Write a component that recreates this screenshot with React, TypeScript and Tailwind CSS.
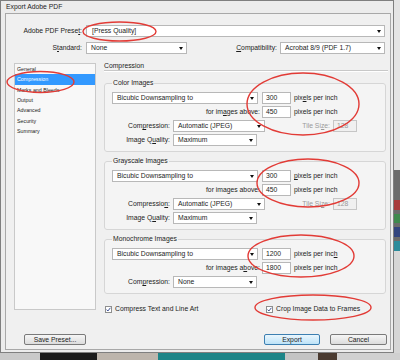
import type { ReactNode } from 'react'

/*
 * Export Adobe PDF dialog (Compression page) with the red marker
 * ellipses drawn over it. Everything is laid out in flow; only the
 * annotation layer is positioned absolutely.
 */

const Arrow = () => (
  <span className="w-0 h-0 border-l-[2.5px] border-r-[2.5px] border-t-[3px] border-l-transparent border-r-transparent border-t-[#111]" />
)

const Select = ({ value, w }: { value: string; w: string }) => (
  <div
    className={`${w} h-[12px] shrink-0 bg-white border border-[#b8b8b8] flex items-center justify-between pl-[4px] pr-[3px]`}
  >
    <span>{value}</span>
    <Arrow />
  </div>
)

const Field = ({ value, w, disabled }: { value: string; w: string; disabled?: boolean }) => (
  <div
    className={`${w} h-[12px] shrink-0 border flex items-center pl-[3px] ${
      disabled ? 'bg-[#f0f0f0] border-[#c6c6c6] text-[#9a9a9a]' : 'bg-white border-[#b8b8b8]'
    }`}
  >
    {value}
  </div>
)

const Label = ({ children, w, muted }: { children: ReactNode; w: string; muted?: boolean }) => (
  <span className={`${w} shrink-0 text-right ${muted ? 'text-[#9a9a9a]' : ''}`}>{children}</span>
)

const Check = ({ children }: { children: ReactNode }) => (
  <div className="flex items-center">
    <span className="w-[7px] h-[7px] bg-white border border-[#8e8f8f] flex items-center justify-center">
      <svg width="5" height="5" viewBox="0 0 5 5">
        <path d="M0.6 2.6 L1.9 4 L4.4 0.8" fill="none" stroke="#2a3f8a" strokeWidth="0.9" />
      </svg>
    </span>
    <span className="ml-[3px]">{children}</span>
  </div>
)

const Group = ({ title, children }: { title: string; children: ReactNode }) => (
  <fieldset className="w-[282px] border border-[#d6d6d6] rounded-[3px] bg-[#f4f4f4] px-[7px] pt-[5px] pb-[5px]">
    <legend className="px-[1px] leading-[8px]">{title}</legend>
    <div className="flex flex-col gap-[2px]">{children}</div>
  </fieldset>
)

const Row = ({ children }: { children: ReactNode }) => (
  <div className="h-[12px] flex items-center">{children}</div>
)

const sections = ['General', 'Compression', 'Marks and Bleeds', 'Output', 'Advanced', 'Security', 'Summary']

const App = () => {
  return (
    <div className="w-[400px] h-[360px] relative overflow-hidden flex flex-col bg-[#cfcfcf] text-[#1c1c1c] text-[6.8px] leading-[8px] font-['Liberation_Sans',Arial,sans-serif]">
      <div className="flex h-[353px]">
        {/* Window frame */}
        <div className="w-[394px] h-full bg-[#ececec] border border-[#7f7f7f] flex flex-col">
          <div className="h-[12px] pl-[5px] flex items-center">Export Adobe PDF</div>

          {/* Client area */}
          <div className="flex-1 ml-[4px] mr-[2px] mb-[2px] bg-[#f0f0f0] border border-[#a8a8a8] flex flex-col">
            <div className="mt-[11px] h-[12px] flex items-center">
              <Label w="w-[76px]">
                Adobe PDF Prese<u>t</u>:
              </Label>
              <div className="ml-[4px] w-[299px] h-[12px] bg-white border border-[#b8b8b8] flex items-center justify-between pl-[5px] pr-[3px]">
                <span>[Press Quality]</span>
                <Arrow />
              </div>
            </div>

            <div className="mt-[5px] h-[12px] flex items-center">
              <Label w="w-[76px]">
                S<u>t</u>andard:
              </Label>
              <div className="ml-[4px]">
                <Select value="None" w="w-[101px]" />
              </div>
              <Label w="w-[90px]">
                <u>C</u>ompatibility:
              </Label>
              <div className="ml-[3px]">
                <Select value="Acrobat 8/9 (PDF 1.7)" w="w-[105px]" />
              </div>
            </div>

            <div className="mt-[8px] h-[250px] flex">
              {/* Section list */}
              <div className="ml-[8px] mt-[1px] w-[82px] h-[247px] bg-[#f8f8f8] border border-[#c9c9c9] text-[5.3px]">
                {sections.map((s) => (
                  <div
                    key={s}
                    className={`h-[10.3px] pl-[2px] flex items-center ${
                      s === 'Compression' ? 'bg-[#3399ff] text-white' : ''
                    }`}
                  >
                    {s}
                  </div>
                ))}
              </div>

              {/* Compression page */}
              <div className="ml-[8px] w-[284px] flex flex-col">
                <div className="h-[9px] border-b border-[#c8c8c8] shadow-[0_1px_0_#ffffff]">Compression</div>

                <div className="mt-[8px]">
                  <Group title="Color Images">
                    <Row>
                      <Select value="Bicubic Downsampling to" w="w-[146px]" />
                      <div className="ml-[4px]">
                        <Field value="300" w="w-[29px]" />
                      </div>
                      <span className="ml-[3px]">
                        pix<u>e</u>ls per inch
                      </span>
                    </Row>
                    <Row>
                      <Label w="w-[148px]">
                        for im<u>a</u>ges above:
                      </Label>
                      <div className="ml-[2px]">
                        <Field value="450" w="w-[29px]" />
                      </div>
                      <span className="ml-[3px]">pixels per inch</span>
                    </Row>
                    <Row>
                      <Label w="w-[58px]">
                        Com<u>p</u>ression:
                      </Label>
                      <div className="ml-[3px]">
                        <Select value="Automatic (JPEG)" w="w-[92px]" />
                      </div>
                      <Label w="w-[65px]" muted>
                        Tile Si<u>z</u>e:
                      </Label>
                      <div className="ml-[3px]">
                        <Field value="128" w="w-[24px]" disabled />
                      </div>
                    </Row>
                    <Row>
                      <Label w="w-[58px]">
                        Image Q<u>u</u>ality:
                      </Label>
                      <div className="ml-[3px]">
                        <Select value="Maximum" w="w-[84px]" />
                      </div>
                    </Row>
                  </Group>
                </div>

                <div className="mt-[5px]">
                  <Group title="Grayscale Images">
                    <Row>
                      <Select value="Bicubic Downsampling to" w="w-[146px]" />
                      <div className="ml-[4px]">
                        <Field value="300" w="w-[29px]" />
                      </div>
                      <span className="ml-[3px]">
                        <u>p</u>ixels per inch
                      </span>
                    </Row>
                    <Row>
                      <Label w="w-[148px]">for images above:</Label>
                      <div className="ml-[2px]">
                        <Field value="450" w="w-[29px]" />
                      </div>
                      <span className="ml-[3px]">pixels per inch</span>
                    </Row>
                    <Row>
                      <Label w="w-[58px]">
                        Compressio<u>n</u>:
                      </Label>
                      <div className="ml-[3px]">
                        <Select value="Automatic (JPEG)" w="w-[92px]" />
                      </div>
                      <Label w="w-[65px]" muted>
                        Tile Si<u>z</u>e:
                      </Label>
                      <div className="ml-[3px]">
                        <Field value="128" w="w-[24px]" disabled />
                      </div>
                    </Row>
                    <Row>
                      <Label w="w-[58px]">
                        Image Q<u>u</u>ality:
                      </Label>
                      <div className="ml-[3px]">
                        <Select value="Maximum" w="w-[84px]" />
                      </div>
                    </Row>
                  </Group>
                </div>

                <div className="mt-[5px]">
                  <Group title="Monochrome Images">
                    <Row>
                      <Select value="Bicubic Downsampling to" w="w-[146px]" />
                      <div className="ml-[4px]">
                        <Field value="1200" w="w-[29px]" />
                      </div>
                      <span className="ml-[3px]">
                        pixels per inc<u>h</u>
                      </span>
                    </Row>
                    <Row>
                      <Label w="w-[148px]">
                        for images a<u>b</u>ove:
                      </Label>
                      <div className="ml-[2px]">
                        <Field value="1800" w="w-[29px]" />
                      </div>
                      <span className="ml-[3px]">pixels per inch</span>
                    </Row>
                    <Row>
                      <Label w="w-[58px]">
                        Com<u>p</u>ression:
                      </Label>
                      <div className="ml-[3px]">
                        <Select value="None" w="w-[84px]" />
                      </div>
                    </Row>
                  </Group>
                </div>

                <div className="mt-[11px] h-[8px] ml-[1px] flex items-center">
                  <div className="w-[161px]">
                    <Check>Compress Text and Line Art</Check>
                  </div>
                  <Check>Crop Image Data to Frames</Check>
                </div>
              </div>
            </div>

            {/* Buttons */}
            <div className="mt-[22px] h-[11px] flex">
              <button className="ml-[18px] w-[62px] h-[11px] rounded-[2px] border border-[#7a7a7a] bg-gradient-to-b from-[#f6f6f6] to-[#dcdcdc] leading-[9px]">
                Save Preset...
              </button>
              <button className="ml-auto w-[56px] h-[11px] rounded-[2px] border border-[#3c7fb1] bg-gradient-to-b from-[#eaf6fd] to-[#bde3f8] leading-[9px]">
                Export
              </button>
              <button className="ml-[10px] mr-[3px] w-[57px] h-[11px] rounded-[2px] border border-[#7a7a7a] bg-gradient-to-b from-[#f6f6f6] to-[#dcdcdc] leading-[9px]">
                Cancel
              </button>
            </div>
          </div>
        </div>

        {/* Desktop photo peeking out on the right */}
        <div className="flex-1 flex flex-col">
          <div className="h-[170px] bg-[#e4e4e4]" />
          <div className="h-[30px] bg-[#6b6b6b]" />
          <div className="h-[10px] bg-[#a83a3a]" />
          <div className="h-[4px] bg-[#6b6b6b]" />
          <div className="h-[9px] bg-[#3f8a4e]" />
          <div className="h-[4px] bg-[#6b6b6b]" />
          <div className="h-[10px] bg-[#33457f]" />
          <div className="h-[4px] bg-[#6b6b6b]" />
          <div className="h-[10px] bg-[#2b8b9b]" />
          <div className="flex-1 bg-[#d6d6d6]" />
        </div>
      </div>

      {/* Desktop photo peeking out below */}
      <div className="flex-1 flex">
        <div className="w-[40px] bg-[#c9c9c9]" />
        <div className="w-[57px] bg-[#1b1b1b]" />
        <div className="w-[61px] bg-[#bdb5ac]" />
        <div className="w-[127px] bg-[#1d8588]" />
        <div className="w-[33px] bg-[#c4c4c4]" />
        <div className="w-[19px] bg-[#4a3a30]" />
        <div className="flex-1 bg-[#d0d0d0]" />
      </div>

      {/* Red marker annotations */}
      <svg className="absolute inset-0 pointer-events-none" width="400" height="360" viewBox="0 0 400 360">
        <g fill="none" stroke="#e23b36" strokeWidth="1.4">
          <ellipse cx="119.5" cy="31.5" rx="36.5" ry="9.5" />
          <ellipse cx="40.5" cy="82" rx="33.5" ry="10.5" />
          <ellipse cx="303" cy="104" rx="56" ry="31" />
          <ellipse cx="308" cy="183" rx="51" ry="24" />
          <ellipse cx="301" cy="256" rx="53" ry="21" />
          <ellipse cx="313" cy="307.5" rx="58" ry="12.5" />
        </g>
      </svg>
    </div>
  )
}

export default App
